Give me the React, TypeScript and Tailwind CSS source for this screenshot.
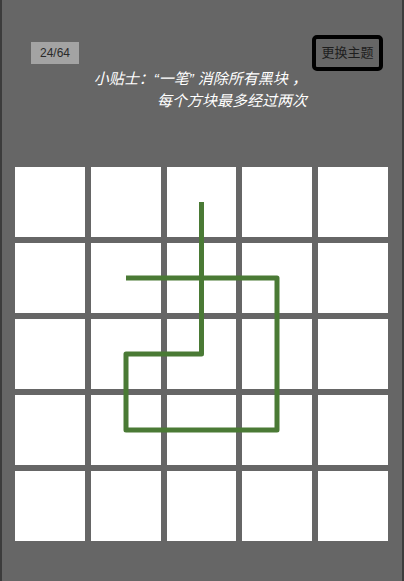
import React from "react";

const C = [50, 126, 201.5, 277, 353];
const R = [202, 278, 354, 430, 506];

export default function App() {
  const cells = Array.from({ length: 25 });
  const pts: [number, number][] = [
    [2, 0], [2, 1], [2, 2], [1, 2], [1, 3], [2, 3], [3, 3], [3, 2], [3, 1], [2, 1], [1, 1],
  ];
  const d = pts.map(([c, r], i) => `${i ? "L" : "M"}${C[c]} ${R[r]}`).join(" ");
  return (
    <div
      className="relative w-[404px] h-[581px] bg-[#666666] border-x-2 border-[#3c3c3c] overflow-hidden"
      style={{ fontFamily: '"Liberation Sans", "Noto Sans CJK SC", sans-serif' }}
    >
      <div className="flex items-start justify-between pt-[35px] pl-[29px] pr-[19px]">
        <div className="mt-[7px] w-[48px] h-[22px] bg-[#a3a3a3] text-[#2a2a2a] text-[12px] flex items-center justify-center">
          24/64
        </div>
        <div className="w-[71px] h-[36px] border-[4px] border-black rounded-[5px] text-[#1e1e1e] text-[13px] flex items-center justify-center">
          更换主题
        </div>
      </div>
      <div className="-mt-[3px] pr-[95px] text-right italic text-white text-[15px] leading-[22px]">
        <div>小贴士：“一笔” 消除所有黑块 ，</div>
        <div>每个方块最多经过两次</div>
      </div>
      <div className="absolute left-[13px] top-[167px] w-[373px] grid grid-cols-5 gap-[6px]">
        {cells.map((_, i) => (
          <div key={i} className="h-[70px] bg-white" />
        ))}
      </div>
      <svg className="absolute left-[-2px] top-0" width="404" height="581">
        <path d={d} fill="none" stroke="#4a7a35" strokeWidth="5" strokeLinejoin="round" strokeLinecap="butt" />
      </svg>
    </div>
  );
}
